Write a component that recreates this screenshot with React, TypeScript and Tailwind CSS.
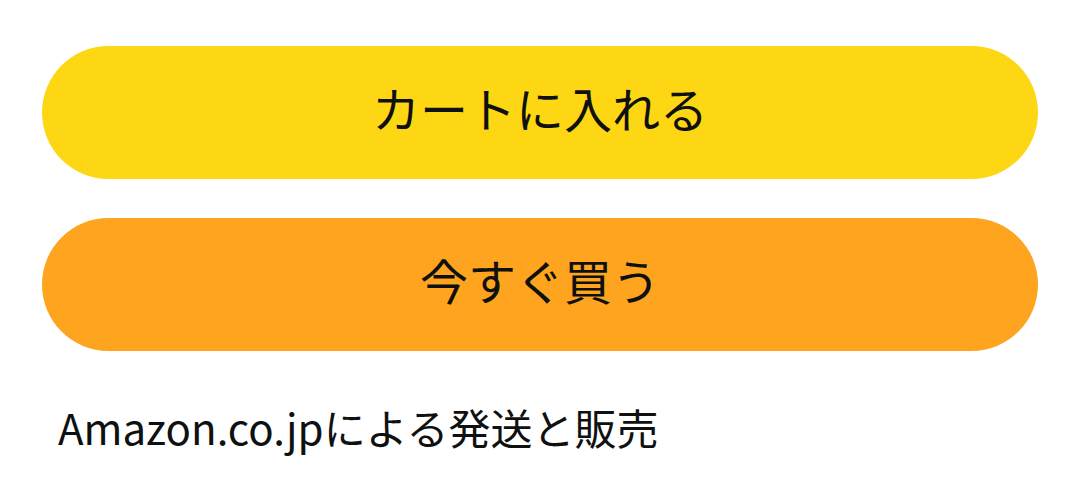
export default function App() {
  return (
    <div
      className="min-h-screen bg-white px-[42px] pt-[46px] text-[#0f1111]"
      style={{ fontFamily: '"Noto Sans CJK JP", "Noto Sans", sans-serif' }}
    >
      <div className="flex flex-col gap-[39px]">
        <button className="flex h-[133px] w-full items-center justify-center rounded-full bg-[#fed714] pb-[12px] text-[48px] leading-none">
          カートに入れる
        </button>
        <button className="flex h-[133px] w-full items-center justify-center rounded-full bg-[#fea41e] pb-[12px] text-[48px] leading-none">
          今すぐ買う
        </button>
      </div>
      <p className="mt-[52px] pl-[16px] text-[42px] leading-[48px]">Amazon.co.jpによる発送と販売</p>
    </div>
  );
}
